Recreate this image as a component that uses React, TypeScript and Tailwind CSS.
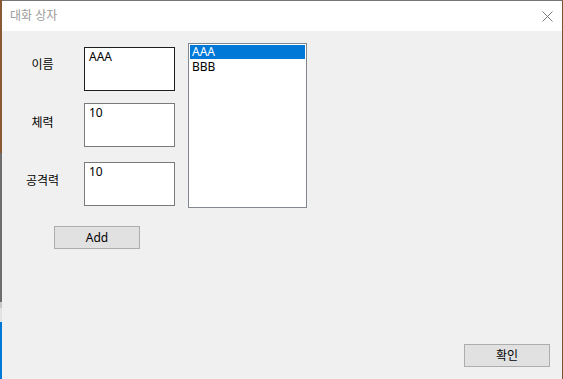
const font = "font-['Noto_Sans','Noto_Sans_CJK_KR',sans-serif]";

const fields = [
  { label: "이름", value: "AAA", focused: true, labelTop: "mt-[10px]" },
  { label: "체력", value: "10", focused: false, labelTop: "mt-[12px]" },
  { label: "공격력", value: "10", focused: false, labelTop: "mt-[11px]" },
];

function DesktopEdge() {
  return (
    <div className="flex w-[2px] shrink-0 flex-col">
      <div className="h-[153px] bg-[#8a5a33]" />
      <div className="h-[149px] bg-[#6e6e6e]" />
      <div className="h-[6px] bg-[#c9c9c9]" />
      <div className="h-[14px] bg-[#e2e2e2]" />
      <div className="flex-1 bg-[#0078d7]" />
    </div>
  );
}

function TextBox({ value, focused }: { value: string; focused: boolean }) {
  return (
    <div
      className={`h-[44px] w-[91px] border bg-white px-[4px] pt-[1px] text-[12px] leading-[16px] text-black ${
        focused ? "border-[#1f1f1f]" : "border-[#7a7a7a]"
      }`}
    >
      {value}
    </div>
  );
}

function Button({ children }: { children: React.ReactNode }) {
  return (
    <button className="flex h-[23px] w-[86px] items-center justify-center border border-[#adadad] bg-[#e1e1e1] text-[12px] text-black">
      {children}
    </button>
  );
}

export default function App() {
  return (
    <div className={`flex h-[379px] w-[563px] overflow-hidden bg-[#f0f0f0] ${font}`}>
      <DesktopEdge />
      <div className="flex flex-1 flex-col border-t border-r border-t-[#767676] border-r-[#7a5230]">
        <div className="flex h-[30px] items-center justify-between bg-white pl-[8px] pr-[9px]">
          <span className="text-[12px] text-[#9a9a9a]">대화 상자</span>
          <svg width="11" height="11" viewBox="0 0 11 11" className="text-[#7c7c7c]">
            <path d="M0.5 0.5L10.5 10.5M10.5 0.5L0.5 10.5" stroke="currentColor" strokeWidth="1" fill="none" />
          </svg>
        </div>

        <div className="flex flex-1 flex-col">
          <div className="flex items-start pl-[18px]">
            <div className="flex flex-col pt-[16px]">
              <div className="flex flex-col gap-[12px]">
                {fields.map((f, i) => (
                  <div key={f.label} className={`flex items-start ${i === 2 ? "mt-[3px]" : ""}`}>
                    <span
                      className={`w-[45px] text-center text-[12px] leading-[16px] text-black ${f.labelTop}`}
                    >
                      {f.label}
                    </span>
                    <div className="ml-[19px]">
                      <TextBox value={f.value} focused={f.focused} />
                    </div>
                  </div>
                ))}
              </div>
              <div className="mt-[20px] pl-[34px]">
                <Button>Add</Button>
              </div>
            </div>

            <div className="ml-[13px] mt-[12px] h-[165px] w-[119px] border border-[#828790] bg-white p-[1px] text-[12px] leading-[14px]">
              <div className="bg-[#0078d7] pl-[2px] text-white">AAA</div>
              <div className="pl-[2px] pt-[1px] text-black">BBB</div>
            </div>
          </div>

          <div className="mt-auto flex justify-end pb-[12px] pr-[12px]">
            <Button>확인</Button>
          </div>
        </div>
      </div>
    </div>
  );
}
